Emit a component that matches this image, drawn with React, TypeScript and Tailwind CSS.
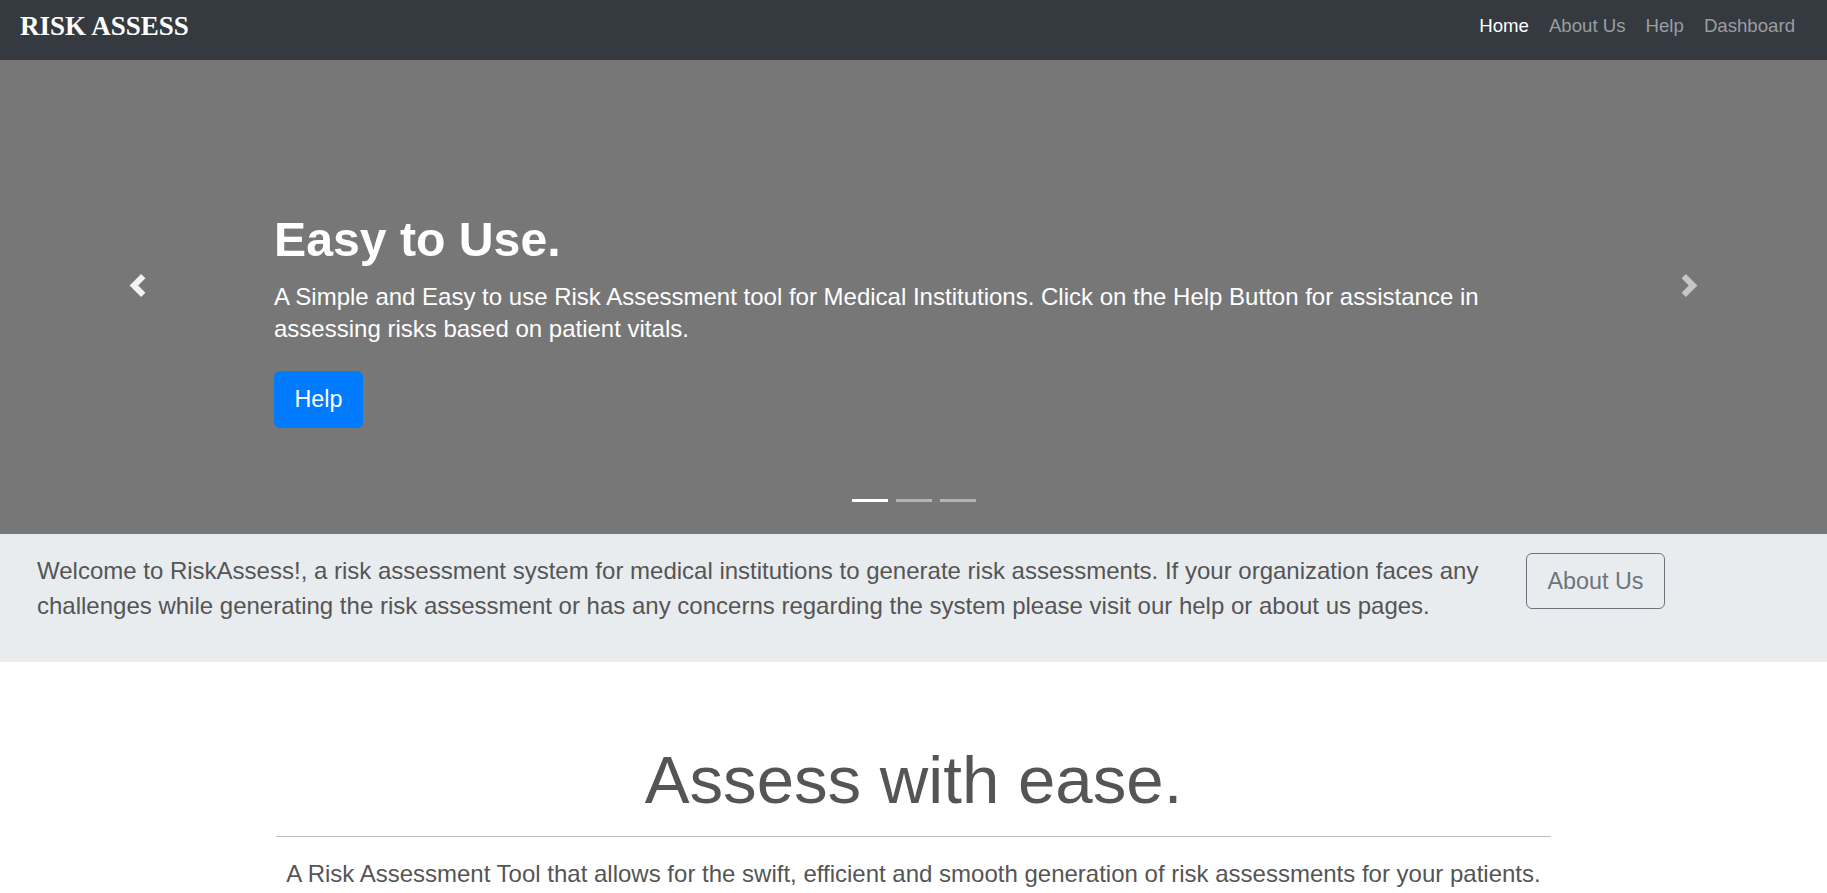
import React from 'react';

const sans = { fontFamily: '"Liberation Sans", Arial, sans-serif' };

function Chevron({ dir, className }: { dir: 'prev' | 'next'; className: string }) {
  const d =
    dir === 'prev'
      ? 'M5.25 0l-4 4 4 4 1.5-1.5L4.25 4l2.5-2.5L5.25 0z'
      : 'M2.75 0l-1.5 1.5L3.75 4l-2.5 2.5L2.75 8l4-4-4-4z';
  return (
    <svg viewBox="0 0 8 8" className={className} fill="currentColor">
      <path d={d} />
    </svg>
  );
}

export default function App() {
  const links = ['Home', 'About Us', 'Help', 'Dashboard'];

  return (
    <div className="min-h-[893px] bg-white font-['Liberation_Sans',Arial,sans-serif]" style={sans}>
      {/* Navbar */}
      <nav className="flex h-[60px] items-start justify-between bg-[#343a40] pl-[20px] pr-[32px]">
        <span className="pt-[12.5px] font-['Liberation_Serif',serif] text-[27px] font-bold leading-none text-white">RISK ASSESS</span>
        <ul className="flex items-center gap-[20px] pt-[16.5px] text-[18.64px] leading-none">
          {links.map((l, i) => (
            <li key={l} className={i === 0 ? 'text-white' : 'text-[#9a9da0]'}>
              {l}
            </li>
          ))}
        </ul>
      </nav>

      {/* Carousel */}
      <section className="relative h-[474px] bg-[#777777]">
        <div className="absolute inset-y-0 left-0 flex w-[274px] items-center justify-center pb-[24px]">
          <Chevron dir="prev" className="h-[23px] w-[23px] text-[#f2f2f2]" />
        </div>
        <div className="absolute inset-y-0 right-0 flex w-[274px] items-center justify-center pb-[24px]">
          <Chevron dir="next" className="ml-[-2px] h-[23px] w-[23px] text-[#c6c6c6]" />
        </div>

        <div className="px-[274px] pt-[151px] text-white">
          <h1 className="text-[48.2px] font-bold leading-[1.2]">Easy to Use.</h1>
          <p className="mt-[12px] text-[24px] leading-[32.5px]">
            A Simple and Easy to use Risk Assessment tool for Medical Institutions. Click on the Help Button for assistance in assessing risks based on patient vitals.
          </p>
          <button className="mt-[25px] flex h-[57px] w-[89px] items-center justify-center rounded-[6px] bg-[#007bff] text-[23.3px] text-white">
            Help
          </button>
        </div>

        <div className="absolute bottom-[32px] left-0 right-0 flex justify-center gap-[8px]">
          <span className="h-[3px] w-[36px] bg-white" />
          <span className="h-[3px] w-[36px] bg-[#b4b4b4]" />
          <span className="h-[3px] w-[36px] bg-[#b4b4b4]" />
        </div>
      </section>

      {/* Welcome band */}
      <section className="flex h-[128px] items-start bg-[#e9ecef] pl-[37px] pt-[19px]">
        <p className="w-[1470px] text-[24px] leading-[35px] text-[#555]">
          Welcome to RiskAssess!, a risk assessment system for medical institutions to generate risk assessments. If your organization faces any challenges while generating the risk assessment or has any concerns regarding the system please visit our help or about us pages.
        </p>
        <button className="ml-[19px] flex h-[56px] w-[139px] shrink-0 items-center justify-center rounded-[6px] border border-[#6c757d] text-[23.3px] text-[#6c757d]">
          About Us
        </button>
      </section>

      {/* Intro */}
      <section className="mx-auto w-[1275px] pt-[78px] text-center text-[#555]">
        <h2 className="text-[67.2px] font-light leading-[1.2]">Assess with ease.</h2>
        <hr className="mt-[15px] border-t border-[#bbbbbb]" />
        <p className="mt-[19px] text-[24px] leading-[35px]">
          A Risk Assessment Tool that allows for the swift, efficient and smooth generation of risk assessments for your patients.
        </p>
      </section>
    </div>
  );
}
